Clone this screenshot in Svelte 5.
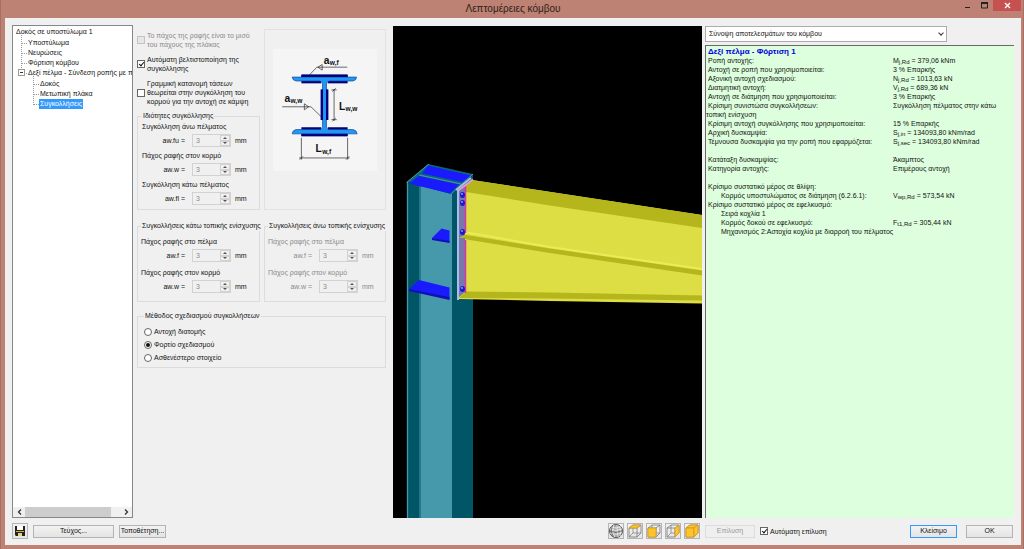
<script>
    // ###############################################
    const checks = $state ([
        { id: "half", lines: ["Το πάχος της ραφής είναι το μισό", "του πάχους της πλάκας"], checked: false, disabled: true },
        { id: "auto", lines: ["Αυτόματη βελτιστοποίηση της", "συγκόλλησης"], checked: true, disabled: false },
        { id: "linear", lines: ["Γραμμική κατανομή τάσεων", "θεωρείται στην συγκόλληση του", "κορμού για την αντοχή σε κάμψη"], checked: false, disabled: false }
    ])

    const mainWelds = [
        { id: "fu", title: "Συγκόλληση άνω πέλματος", label: "aw.fu =" },
        { id: "w", title: "Πάχος ραφής στον κορμό", label: "aw.w =" },
        { id: "fl", title: "Συγκόλληση κάτω πέλματος", label: "aw.fl =" }
    ]
    const lowerWelds = [
        { id: "lf", title: "Πάχος ραφής στο πέλμα", label: "aw.f =" },
        { id: "lw", title: "Πάχος ραφής στον κορμό", label: "aw.w =" }
    ]
    const upperWelds = [
        { id: "uf", title: "Πάχος ραφής στο πέλμα", label: "aw.f =" },
        { id: "uw", title: "Πάχος ραφής στον κορμό", label: "aw.w =" }
    ]

    const methods = ["Αντοχή διατομής", "Φορτίο σχεδιασμού", "Ασθενέστερο στοιχείο"]
    let method = $state ("Φορτίο σχεδιασμού")
    let autoSolve = $state (true)

    const results = [
        { name: "Ροπή αντοχής:", sym: "M", sub: "j,Rd", value: " = 379,06 kNm" },
        { name: "Αντοχή σε ροπή που χρησιμοποιείται:", value: "3 % Επαρκής" },
        { name: "Αξονική αντοχή σχεδιασμού:", sym: "N", sub: "j,Rd", value: " = 1013,63 kN" },
        { name: "Διατμητική αντοχή:", sym: "V", sub: "j,Rd", value: " = 689,36 kN" },
        { name: "Αντοχή σε διάτμηση που χρησιμοποιείται:", value: "3 % Επαρκής" },
        { name: "Κρίσιμη συνιστώσα συγκολλήσεων:", value: "Συγκόλληση πέλματος στην κάτω" },
        { name: "τοπική ενίσχυση", wide: true, outdent: true },
        { name: "Κρίσιμη αντοχή συγκόλλησης που χρησιμοποιείται:", value: "15 % Επαρκής" },
        { name: "Αρχική δυσκαμψία:", sym: "S", sub: "j,in", value: " = 134093,80 kNm/rad" },
        { name: "Τέμνουσα δυσκαμψία για την ροπή που εφαρμόζεται:", sym: "S", sub: "j,sec", value: " = 134093,80 kNm/rad" },
        { name: "", wide: true },
        { name: "Κατάταξη δυσκαμψίας:", value: "Άκαμπτος" },
        { name: "Κατηγορία αντοχής:", value: "Επιμέρους αντοχή" },
        { name: "", wide: true },
        { name: "Κρίσιμο συστατικό μέρος σε θλίψη:", wide: true },
        { name: "Κορμός υποστυλώματος σε διάτμηση (6.2.6.1):", indent: true, sym: "V", sub: "wp,Rd", value: " = 573,54 kN" },
        { name: "Κρίσιμο συστατικό μέρος σε εφελκυσμό:", wide: true },
        { name: "Σειρά κοχλία 1", wide: true, indent: true },
        { name: "Κορμός δοκού σε εφελκυσμό:", indent: true, sym: "F", sub: "t1,Rd", value: " = 305,44 kN" },
        { name: "Μηχανισμός 2:Αστοχία κοχλία με διαρροή του πέλματος", wide: true, indent: true }
    ]

    // filled face of each view cube
    const cubes = [
        { name: "Κάτοψη", faces: ["1,4 5,1 13,1 9,4"] },
        { name: "Πρόσοψη", faces: ["1,4 9,4 9,13 1,13"] },
        { name: "Πλάγια όψη", faces: ["9,4 13,1 13,9 9,13"] },
        { name: "Προοπτική", faces: ["1,4 5,1 13,1 9,4", "1,4 9,4 9,13 1,13", "9,4 13,1 13,9 9,13"] }
    ]
</script>

{#snippet weld (item)}
    <div class="weld">
        <div class="weld-title">{item.title}</div>
        <div class="weld-row">
            <label for="aw-{item.id}">{item.label}</label>
            <span class="spin">
                <input id="aw-{item.id}" type="text" value="3" disabled>
                <span class="arrows">
                    <button type="button" aria-label="Αύξηση" disabled><svg viewBox="0 0 4 2"><path d="M0 2L2 0L4 2z" /></svg></button>
                    <button type="button" aria-label="Μείωση" disabled><svg viewBox="0 0 4 2"><path d="M0 0L2 2L4 0z" /></svg></button>
                </span>
            </span>
            <span>mm</span>
        </div>
    </div>
{/snippet}

<div class="window">
    <header>
        <h1>Λεπτομέρειες κόμβου</h1>
        <div class="caption">
            <button type="button" aria-label="Ελαχιστοποίηση"><svg width="7" height="7"><path d="M1 5.5h5" stroke="#222" fill="none" /></svg></button>
            <button type="button" aria-label="Μεγιστοποίηση"><svg width="7" height="7"><path d="M.5 1h6v5h-6z" stroke="#222" fill="none" /><path d="M0 1h7" stroke="#222" stroke-width="2" /></svg></button>
            <button type="button" class="close" aria-label="Έξοδος"><svg width="7" height="7"><path d="M1 1l5 5M6 1l-5 5" stroke="#fff" stroke-width="1.3" fill="none" /></svg></button>
        </div>
    </header>

    <div class="client">
        <main>
            <nav class="tree">
                <div class="nodes">
                    <button type="button">Δοκός σε υποστύλωμα 1</button>
                    <ul>
                        <li><button type="button">Υποστύλωμα</button></li>
                        <li><button type="button">Νευρώσεις</button></li>
                        <li><button type="button">Φόρτιση κόμβου</button></li>
                        <li class="open">
                            <svg class="toggle" width="7" height="7"><rect x=".5" y=".5" width="6" height="6" fill="#fff" stroke="#999" /><path d="M2 3.5h3" stroke="#333" /></svg>
                            <button type="button">Δεξί πέλμα - Σύνδεση ροπής με πλ</button>
                            <ul>
                                <li><button type="button">Δοκός</button></li>
                                <li><button type="button">Μετωπική πλάκα</button></li>
                                <li><button type="button" class="selected">Συγκολλήσεις</button></li>
                            </ul>
                        </li>
                    </ul>
                </div>
                <div class="scroll">
                    <button type="button" aria-label="Αριστερά"><svg width="5" height="6"><path d="M4 .5L1.500 3L4 5.500" fill="none" stroke="#333" stroke-width="1.300" /></svg></button>
                    <div class="track"><div class="thumb"></div></div>
                    <button type="button" aria-label="Δεξιά"><svg width="5" height="6"><path d="M1 .5L3.500 3L1 5.500" fill="none" stroke="#333" stroke-width="1.300" /></svg></button>
                </div>
            </nav>

            <section class="settings">
                <div class="pair">
                    <div>
                        <div class="checks">
                            {#each checks as check (check.id)}
                                <div class="check" class:off={check.disabled}>
                                    <input id={check.id} type="checkbox" bind:checked={check.checked} disabled={check.disabled}>
                                    <label for={check.id}>{#each check.lines as line}<span>{line}</span>{/each}</label>
                                </div>
                            {/each}
                        </div>
                        <fieldset class="main-welds">
                            <legend>Ιδιότητες συγκόλλησης</legend>
                            {#each mainWelds as item (item.id)}
                                {@render weld (item)}
                            {/each}
                        </fieldset>
                    </div>
                    <div class="figure">
                        <svg viewBox="39 57 315 369" role="img" aria-label="Συγκολλήσεις διατομής">
                            <rect x="39" y="57" width="315" height="369" fill="#f5f5f5" />
                            <g fill="#00007c">
                                <rect x="125" y="135" width="140" height="9" />
                                <rect x="125" y="151" width="60" height="10" />
                                <rect x="205" y="151" width="60" height="10" />
                                <rect x="184" y="180" width="22" height="92" />
                                <rect x="125" y="294" width="60" height="10" />
                                <rect x="205" y="294" width="60" height="10" />
                                <rect x="125" y="312" width="140" height="9" />
                            </g>
                            <path d="M97 142H292Q292 152 281 154H210Q201 155 201 163V293Q201 301 210 301H281Q293 303 294 314H97Q98 303 109 301H180Q189 301 189 293V163Q189 155 180 154H109Q98 152 97 142z" fill="#2196f3" stroke="#06469a" stroke-width="2" />
                            <path d="M187 180v92M203 180v92" stroke="#00007c" stroke-width="7" />
                            <path d="M125 138h140M125 318h140" stroke="#00007c" stroke-width="7" />
                            <g fill="none" stroke="#222" stroke-width="2">
                                <path d="M264 112H172L149 136M188 104v17l-13-9z" />
                                <path d="M67 232H154L187 264M134 223v18l13-9z" />
                                <path d="M224 178v97M216 181h16M216 271h16M219 186l10-10M219 276l10-10" />
                                <path d="M125 326v66M265 326v66M118 387h153M120 392l10-10M260 392l10-10" />
                            </g>
                            <g font-family="Liberation Sans, Arial, sans-serif" font-weight="bold" fill="#111">
                                <text x="193" y="102" font-size="31">a</text><text x="211" y="105" font-size="20">w,f</text>
                                <text x="74" y="217" font-size="31">a</text><text x="92" y="220" font-size="20">w,w</text>
                                <text x="239" y="241" font-size="31">L</text><text x="259" y="246" font-size="20">w,w</text>
                                <text x="168" y="370" font-size="31">L</text><text x="188" y="374" font-size="20">w,f</text>
                            </g>
                        </svg>
                    </div>
                </div>

                <div class="pair stiffeners">
                    <fieldset>
                        <legend>Συγκολλήσεις κάτω τοπικής ενίσχυσης</legend>
                        {#each lowerWelds as item (item.id)}
                            {@render weld (item)}
                        {/each}
                    </fieldset>
                    <fieldset class="off">
                        <legend>Συγκολλήσεις άνω τοπικής ενίσχυσης</legend>
                        {#each upperWelds as item (item.id)}
                            {@render weld (item)}
                        {/each}
                    </fieldset>
                </div>

                <fieldset class="methods">
                    <legend>Μέθοδος σχεδιασμού συγκολλήσεων</legend>
                    {#each methods as name}
                        <label><input type="radio" name="method" value={name} bind:group={method}>{name}</label>
                    {/each}
                </fieldset>
            </section>

            <section class="view">
                <svg viewBox="0 0 309 492" preserveAspectRatio="xMidYMid slice" role="img" aria-label="Τρισδιάστατη όψη κόμβου">
                    <g transform="translate(-393 -26)">
                        <!-- column -->
                        <path d="M407 182L452 193L473 174V520H407z" fill="#005566" />
                        <path d="M419 186L422 187V520H419z" fill="#237788" />
                        <path d="M421 186L452 194V520H421z" fill="#4699ab" />
                        <path d="M407.500 182V520" stroke="#4699ab" stroke-width="1.300" />
                        <path d="M407 182L428 164L473 174L451 194z" fill="#0b6677" />
                        <path d="M428 165.500L471 175.500L462 182L422 173.500z" fill="#1a1aff" />
                        <path d="M419 176L459 184.500L450 193.500L409 183.500z" fill="#1a1aff" />
                        <path d="M419 175L461 184M406.500 182.500L429 164M451 194L473 174" stroke="#4699ab" fill="none" />
                        <!-- stiffeners -->
                        <path d="M432 238L441.500 228.500L449.500 230.500V242.500z" fill="#1a1aff" />
                        <path d="M432 238L449.500 241V243L432 240z" fill="#1010b4" />
                        <path d="M409 289L419 280L449.500 287.500V299z" fill="#1a1aff" />
                        <path d="M409 289L449.500 297V300L409 291z" fill="#1010b4" />
                        <!-- beam -->
                        <path d="M459 192L472 180L702 215V303.500L550 301L459 299z" fill="#dddd44" />
                        <path d="M460 191L472 180L702 215V228L550 205.500z" fill="#b5b51c" />
                        <path d="M464 232L550 247L702 269" stroke="#ebeb58" stroke-width="2" fill="none" />
                        <path d="M459 238L466 235L550 248.500L702 270.500V275.500L550 253L470 240z" fill="#b5b51c" />
                        <path d="M459 298L466 291.500L550 292.500L702 295.500V300.500L550 298.500z" fill="#b5b51c" />
                        <!-- end plate and bolts -->
                        <path d="M458 191L465 185V235L459 238H465V292L458 298z" fill="#7777aa" />
                        <path d="M465.500 186V233M465.500 240V293" stroke="#dd33aa" stroke-width="1.500" />
                        <path d="M457.500 191L473 179.500" stroke="#e89bd0" stroke-width="2" />
                        <path d="M456 190L471 178M458 190V300" stroke="#aabbee" stroke-width="2" fill="none" />
                        {#each [195, 203, 232, 289] as y}
                            <ellipse cx="462.500" cy={y} rx="2.500" ry="3" fill="#1a1acc" />
                            <circle cx="462" cy={y - 1} r="1" fill="#8899ff" />
                        {/each}
                    </g>
                </svg>
            </section>

            <section class="output">
                <select aria-label="Αποτελέσματα">
                    <option>Σύνοψη αποτελεσμάτων του κόμβου</option>
                </select>
                <div class="report">
                    <h2>Δεξί πέλμα - Φόρτιση 1</h2>
                    <table>
                        <tbody>
                            {#each results as row}
                                <tr>
                                    <td colspan={row.wide ? 2 : 1} class:indent={row.indent} class:outdent={row.outdent}>{row.name}</td>
                                    {#if !row.wide}
                                        <td class="value">{row.sym}{#if row.sub}<sub>{row.sub}</sub>{/if}{row.value}</td>
                                    {/if}
                                </tr>
                            {/each}
                        </tbody>
                    </table>
                </div>
            </section>
        </main>

        <footer>
            <button type="button" class="icon" aria-label="Αποθήκευση">
                <svg width="10" height="10"><path d="M0 0h10v10H1L0 9z" fill="#222" /><path d="M2 0h6v4H2z" fill="#fff" /><path d="M1 5h8v1H1z" fill="#d8b02a" /><path d="M3 7h4v3H3z" fill="#e8d080" /></svg>
            </button>
            <button type="button" class="issue">Τεύχος...</button>
            <button type="button" class="place">Τοποθέτηση...</button>
            <div class="views">
                <button type="button" class="icon" aria-label="Περιστροφή">
                    <svg width="14" height="14"><circle cx="7" cy="7" r="6.500" fill="#aaa" stroke="#555" /><path d="M1 5Q6 8 13 5M1 9Q7 12 13 8M2 3Q7 5 12 3M5 1Q2 7 6 13M8 1Q8 7 9 13M10 2Q13 7 11 12" fill="none" stroke="#eee" stroke-width=".8" /><path d="M1 7Q7 10 13 7M3 2Q1 8 4 12" fill="none" stroke="#555" stroke-width=".6" /></svg>
                </button>
                {#each cubes as cube}
                    <button type="button" class="icon" aria-label={cube.name}>
                        <svg width="14" height="14">
                            <path d="M5 1V9H13M5 9L1 13" fill="none" stroke="#888" stroke-width=".8" />
                            <path d="M1 4L5 1H13V9L9 13H1zM1 4H9V13M9 4L13 1" fill="none" stroke="#777" stroke-width=".8" />
                            {#each cube.faces as face}<polygon points={face} fill="#fcc52c" stroke="#d6981a" stroke-width=".8" />{/each}
                        </svg>
                    </button>
                {/each}
            </div>
            <div class="actions">
                <button type="button" class="solve" disabled>Επίλυση</button>
                <div class="check">
                    <input id="autosolve" type="checkbox" bind:checked={autoSolve}>
                    <label for="autosolve">Αυτόματη επίλυση</label>
                </div>
                <button type="button" class="primary">Κλείσιμο</button>
                <button type="button" class="ok">OK</button>
            </div>
        </footer>
    </div>
</div>

<style>
    .window {
        box-sizing: border-box;
        display: flex;
        flex-direction: column;
        min-height: 100vh;
        padding: 0 3px 4px 5px;
        background: #bd8273;
        box-shadow: inset 1px 0 #a87064, inset -1px 0 #a87064;
        color: #111;
        font-family: "Liberation Sans", Arial, sans-serif;
        font-size: 7px;
        line-height: 10px;
    }

    button, input, select {
        box-sizing: border-box;
        margin: 0;
        padding: 0;
        font: inherit;
        color: inherit;
    }

    svg {
        display: block;
    }

    header {
        display: grid;
        grid-template-columns: 1fr auto 1fr;
        height: 18px;
    }

    h1 {
        grid-column: 2;
        margin: 0;
        font-size: 10px;
        font-weight: normal;
        line-height: 17px;
        color: #2d1d18;
    }

    .caption {
        display: flex;
        justify-content: flex-end;
    }

    .caption button {
        display: grid;
        place-items: center;
        width: 17px;
        height: 11px;
        border: 0;
        background: none;
    }

    .caption .close {
        width: 28px;
        background: #c75050;
    }

    .client {
        flex: 1;
        display: flex;
        flex-direction: column;
        padding: 7px 7px 6px;
        background: #f0f0f0;
    }

    main {
        flex: 1;
        display: grid;
        grid-template-columns: 121px 254px minmax(0, 1fr) 309px;
    }

    /* tree */
    .tree {
        display: flex;
        flex-direction: column;
        min-width: 0;
        border: 1px solid #828790;
        background: #fff;
    }

    .nodes {
        flex: 1;
        overflow: hidden;
        padding: 1px 0 0 2px;
        white-space: nowrap;
    }

    .nodes button {
        display: block;
        height: 10px;
        padding: 0 1px;
        border: 0;
        background: none;
        line-height: 10px;
    }

    .nodes .selected {
        background: #3399ff;
        color: #fff;
    }

    ul {
        list-style: none;
        margin: 1px 0 0;
        padding: 0 0 0 12px;
    }

    li {
        position: relative;
    }

    li::before {
        content: "";
        position: absolute;
        left: -6px;
        top: -5px;
        width: 5px;
        height: 10px;
        border-left: 1px dotted #999;
        border-bottom: 1px dotted #999;
    }

    .toggle {
        position: absolute;
        left: -9px;
        top: 1px;
    }

    .scroll {
        display: flex;
        height: 10px;
        background: #f0f0f0;
    }

    .scroll button {
        display: grid;
        place-items: center;
        width: 12px;
        border: 0;
        background: none;
    }

    .track {
        flex: 1;
    }

    .thumb {
        width: 90%;
        height: 100%;
        background: #cdcdcd;
    }

    /* settings */
    .settings {
        padding: 4px 0 0 4px;
    }

    .pair {
        display: grid;
        grid-template-columns: 123px 122px;
        gap: 4px;
    }

    .checks {
        display: grid;
        gap: 6px;
        padding: 2px 0 5px;
    }

    .check {
        display: flex;
        align-items: center;
        gap: 2px;
        line-height: 9px;
        white-space: nowrap;
    }

    .check span {
        display: block;
    }

    .off {
        color: #8a8a8a;
    }

    input[type="checkbox"], input[type="radio"] {
        appearance: none;
        flex: none;
        display: grid;
        place-items: center;
        width: 8px;
        height: 8px;
        border: 1px solid #666;
        background: #fff;
    }

    input[type="checkbox"]:disabled {
        border-color: #c4c4c4;
        background: #e6e6e6;
    }

    input[type="checkbox"]:checked::before {
        content: "";
        width: 2px;
        height: 4px;
        margin-bottom: 1px;
        border: solid #111;
        border-width: 0 1px 1px 0;
        transform: rotate(40deg);
    }

    input[type="radio"] {
        border-radius: 50%;
    }

    input[type="radio"]:checked::before {
        content: "";
        width: 4px;
        height: 4px;
        border-radius: 50%;
        background: #111;
    }

    fieldset {
        min-width: 0;
        margin: 0;
        padding: 1px 4px 0;
        border: 1px solid #dcdcdc;
        white-space: nowrap;
    }

    legend {
        padding: 0 1px;
        color: #111;
    }

    .weld {
        display: grid;
        gap: 2px;
        margin-bottom: 4px;
    }

    .stiffeners {
        padding: 11px 0 9px;
    }

    .stiffeners fieldset {
        padding: 6px 3px 2px;
    }

    .stiffeners .weld {
        margin-bottom: 6px;
    }

    .weld-row {
        display: grid;
        grid-template-columns: 47px 39px auto;
        column-gap: 4px;
        align-items: center;
        height: 13px;
    }

    .main-welds .weld-row {
        grid-template-columns: 46px 39px auto;
    }

    .weld-row label {
        padding-right: 3px;
        text-align: right;
    }

    .spin {
        display: flex;
        height: 13px;
        box-sizing: border-box;
        border: 1px solid #d2d2d2;
    }

    .spin input {
        flex: 1;
        min-width: 0;
        padding-left: 3px;
        border: 0;
        background: none;
        color: #8a8a8a;
    }

    .arrows {
        display: grid;
        grid-template-rows: 1fr 1fr;
        width: 10px;
    }

    .arrows button {
        display: grid;
        place-items: center;
        border: 1px solid #d2d2d2;
        background: #f0f0f0;
    }

    .arrows svg {
        width: 4px;
        height: 2px;
        fill: #555;
    }

    .figure {
        padding: 19px 8px 0;
        border: 1px solid #e2e2e2;
    }

    .methods {
        margin-right: 1px;
        padding: 4px 6px 3px;
    }

    .methods label {
        display: flex;
        align-items: center;
        gap: 2px;
        height: 13px;
    }

    /* 3d view */
    .view {
        position: relative;
        margin: 1px 3px 0 6px;
        background: #000;
    }

    .view svg {
        position: absolute;
        width: 100%;
        height: 100%;
    }

    /* results */
    .output {
        position: relative;
        display: flex;
        flex-direction: column;
        gap: 3px;
        padding-top: 1px;
    }

    .output::before {
        content: "";
        position: absolute;
        left: 234px;
        top: 6px;
        width: 3px;
        height: 3px;
        border: solid #333;
        border-width: 0 1px 1px 0;
        transform: rotate(45deg);
    }

    select {
        appearance: none;
        width: 242px;
        height: 16px;
        padding: 0 3px;
        border: 1px solid #acacac;
        border-radius: 0;
        background: #fff;
    }

    .report {
        flex: 1;
        padding: 1px 0 0 2px;
        border-top: 1px solid #696969;
        border-left: 1px solid #696969;
        background: #ddffdd;
        line-height: 9px;
    }

    h2 {
        margin: 0;
        font-size: 8px;
        line-height: 9px;
        color: #0000e0;
    }

    table {
        width: 100%;
        border-collapse: collapse;
        table-layout: fixed;
    }

    td {
        height: 9px;
        padding: 0;
        white-space: nowrap;
    }

    td.value {
        width: 121px;
    }

    td.indent {
        padding-left: 13px;
    }

    td.outdent {
        position: relative;
        left: -2px;
    }

    sub {
        font-size: 6px;
        line-height: 0;
        vertical-align: -1px;
    }

    /* bottom bar */
    footer {
        display: flex;
        align-items: center;
        gap: 5px;
        padding-top: 5px;
    }

    footer button {
        height: 13px;
        border: 1px solid #b4b4b4;
        background: linear-gradient(#f2f2f2, #e4e4e4);
    }

    footer .icon {
        display: grid;
        place-items: center;
        width: 16px;
        height: 16px;
    }

    .issue {
        width: 81px;
    }

    .place {
        width: 47px;
    }

    .views {
        display: flex;
        gap: 3px;
        margin-left: auto;
    }

    .actions {
        display: flex;
        align-items: center;
        gap: 5px;
        width: 309px;
    }

    .solve {
        width: 50px;
    }

    .solve:disabled {
        border-color: #dcdcdc;
        background: #efefef;
        color: #999;
    }

    .actions .primary {
        width: 47px;
        margin: 0 4px 0 auto;
        border-color: #3399ff;
    }

    .ok {
        width: 47px;
        margin-right: 1px;
    }
</style>
